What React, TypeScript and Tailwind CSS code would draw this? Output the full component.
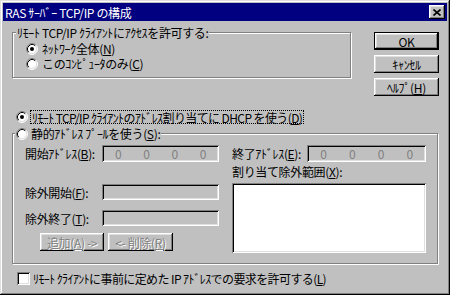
import React from "react";

const raised =
  "shadow-[inset_-1px_-1px_#000,inset_1px_1px_#fff,inset_-2px_-2px_#808080,inset_2px_2px_#dfdfdf]";
const sunken =
  "shadow-[inset_1px_1px_#808080,inset_-1px_-1px_#fff,inset_2px_2px_#000,inset_-2px_-2px_#dfdfdf]";
const etched = "border border-[#808080] shadow-[inset_1px_1px_#fff,1px_1px_#fff]";

const Radio = ({ checked }: { checked?: boolean }) => (
  <svg width="12" height="12" viewBox="0 0 12 12" className="shrink-0">
    <circle cx="6" cy="6" r="5" fill="#fff" />
    <path d="M2.11 9.89A5.5 5.5 0 0 1 9.89 2.11" stroke="#808080" fill="none" />
    <path d="M9.89 2.11A5.5 5.5 0 0 1 2.11 9.89" stroke="#fff" fill="none" />
    <path d="M2.82 9.18A4.5 4.5 0 0 1 9.18 2.82" stroke="#000" fill="none" />
    <path d="M9.18 2.82A4.5 4.5 0 0 1 2.82 9.18" stroke="#dfdfdf" fill="none" />
    {checked && <circle cx="6" cy="6" r="2" fill="#000" />}
  </svg>
);

const AddrField = ({ w }: { w: string }) => (
  <div className={`${w} h-[17px] shrink-0 ${sunken} grid grid-cols-4 px-[2px] items-center text-[#808080]`}>
    <span className="text-center">0</span>
    <span className="text-center">0</span>
    <span className="text-center">0</span>
    <span className="text-center">0</span>
  </div>
);

const DisabledBtn = ({ children, w }: { children: React.ReactNode; w: string }) => (
  <div
    className={`${w} h-[18px] shrink-0 ${raised} flex items-center justify-center text-[#808080] [text-shadow:1px_1px_0_#fff]`}
  >
    {children}
  </div>
);

export default function App() {
  return (
    <div className="w-[450px] h-[295px] overflow-hidden bg-[#c0c0c0] p-[3px] shadow-[inset_-1px_-1px_#000,inset_1px_1px_#dfdfdf,inset_-2px_-2px_#808080,inset_2px_2px_#fff] font-['Noto_Sans_CJK_JP',sans-serif] text-[12px] leading-[13px] tracking-[-0.35px] text-black">
      {/* title bar */}
      <div className="h-[18px] bg-[#000080] flex items-center justify-between pl-[2px] pr-[2px]">
        <span className="text-white">RAS ｻｰﾊﾞｰ TCP/IP の構成</span>
        <div className={`w-[16px] h-[14px] bg-[#c0c0c0] ${raised} flex items-center justify-center`}>
          <svg width="8" height="7" viewBox="0 0 8 7">
            <path d="M0.5 0.5L7.5 6.5M7.5 0.5L0.5 6.5" stroke="#000" strokeWidth="1.6" />
          </svg>
        </div>
      </div>

      <div className="flex flex-col pl-[9px]">
        {/* access group + buttons */}
        <div className="flex items-start mt-[11px] shrink-0">
          <div className={`w-[339px] h-[46px] shrink-0 ${etched} flex flex-col`}>
            <div className="-mt-[7px] ml-[3px] px-[1px] w-fit bg-[#c0c0c0] h-[13px] shrink-0">
              ﾘﾓｰﾄ TCP/IP ｸﾗｲｱﾝﾄにｱｸｾｽを許可する:
            </div>
            <div className="mt-[2px] pl-[13px] h-[15px] shrink-0 flex items-center gap-[4px]">
              <Radio checked />
              <span>
                ﾈｯﾄﾜｰｸ全体(<u>N</u>)
              </span>
            </div>
            <div className="pl-[13px] h-[15px] shrink-0 flex items-center gap-[4px]">
              <Radio />
              <span>
                このｺﾝﾋﾟｭｰﾀのみ(<u>C</u>)
              </span>
            </div>
          </div>
          <div className="ml-[23px] flex flex-col gap-[5px] shrink-0">
            <div className="w-[65px] h-[18px] border border-black">
              <div className={`w-full h-full ${raised} flex items-center justify-center`}>OK</div>
            </div>
            <div className={`w-[65px] h-[18px] ${raised} flex items-center justify-center`}>ｷｬﾝｾﾙ</div>
            <div className={`w-[65px] h-[18px] ${raised} flex items-center justify-center`}>
              ﾍﾙﾌﾟ(<u>H</u>)
            </div>
          </div>
        </div>

        {/* DHCP */}
        <div className="mt-[14px] pl-[4px] h-[14px] shrink-0 flex items-center">
          <Radio checked />
          <div className="ml-[2px] px-[1px] h-[14px] flex items-center border border-dotted border-black tracking-[-0.6px]">
            ﾘﾓｰﾄ TCP/IP ｸﾗｲｱﾝﾄのｱﾄﾞﾚｽ割り当てに DHCP を使う(<u>D</u>)
          </div>
        </div>

        {/* static pool group */}
        <div className={`mt-[9px] w-[426px] h-[131px] shrink-0 ${etched} flex flex-col`}>
          <div className="-mt-[7px] ml-[2px] px-[1px] w-fit bg-[#c0c0c0] h-[13px] shrink-0 flex items-center gap-[3px]">
            <Radio />
            <span>
              静的ｱﾄﾞﾚｽ ﾌﾟｰﾙを使う(<u>S</u>):
            </span>
          </div>
          <div className="mt-[5px] flex shrink-0">
            <div className="pl-[12px] flex flex-col">
              <div className="flex items-center h-[17px] shrink-0">
                <span className="w-[77px] shrink-0">
                  開始ｱﾄﾞﾚｽ(<u>B</u>):
                </span>
                <AddrField w="w-[117px]" />
              </div>
              <div className="mt-[22px] flex items-center h-[16px] shrink-0">
                <span className="w-[77px] shrink-0">
                  除外開始(<u>F</u>):
                </span>
                <div className={`w-[117px] h-[16px] shrink-0 ${sunken}`} />
              </div>
              <div className="mt-[10px] flex items-center h-[16px] shrink-0">
                <span className="w-[77px] shrink-0">
                  除外終了(<u>T</u>):
                </span>
                <div className={`w-[117px] h-[16px] shrink-0 ${sunken}`} />
              </div>
              <div className="mt-[7px] ml-[15px] flex gap-[4px] shrink-0">
                <DisabledBtn w="w-[64px]">
                  追加(<u>A</u>) -&gt;
                </DisabledBtn>
                <DisabledBtn w="w-[65px]">
                  &lt;- 削除(<u>R</u>)
                </DisabledBtn>
              </div>
            </div>
            <div className="ml-[13px] flex flex-col">
              <div className="flex items-center h-[17px] shrink-0">
                <span className="w-[75px] shrink-0">
                  終了ｱﾄﾞﾚｽ(<u>E</u>):
                </span>
                <AddrField w="w-[119px]" />
              </div>
              <div className="mt-[3px] h-[13px] shrink-0">
                割り当て除外範囲(<u>X</u>):
              </div>
              <div className={`mt-[5px] w-[194px] h-[70px] shrink-0 bg-white ${sunken}`} />
            </div>
          </div>
        </div>

        {/* checkbox */}
        <div className="mt-[8px] pl-[5px] flex items-center gap-[3px] h-[13px] shrink-0">
          <div className={`w-[13px] h-[13px] shrink-0 bg-white ${sunken}`} />
          <span className="tracking-[-0.6px]">
            ﾘﾓｰﾄ ｸﾗｲｱﾝﾄに事前に定めた IP ｱﾄﾞﾚｽでの要求を許可する(<u>L</u>)
          </span>
        </div>
      </div>
    </div>
  );
}
